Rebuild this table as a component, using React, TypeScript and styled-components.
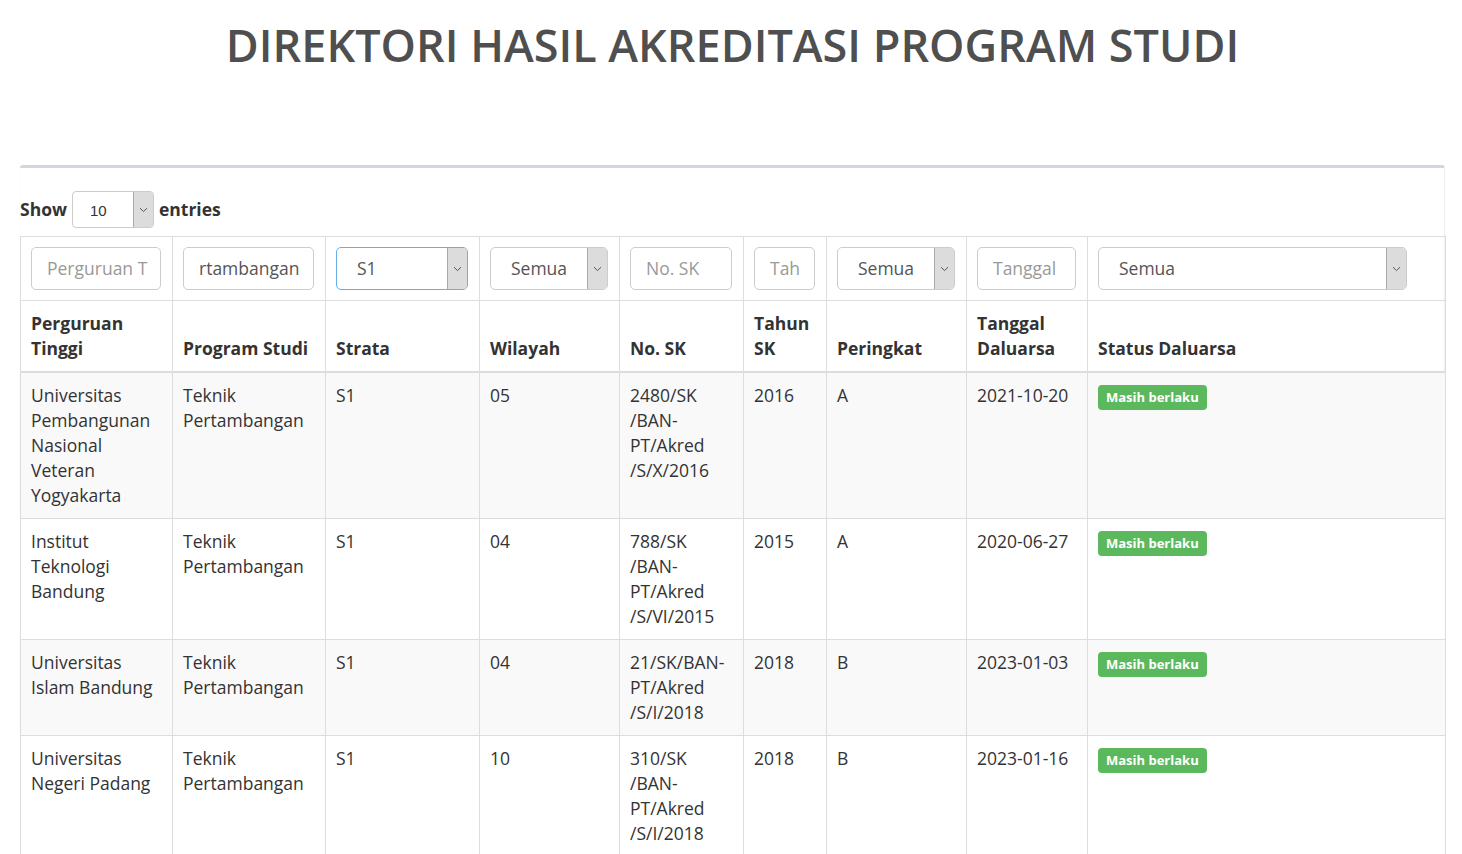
import React from "react";
import styled, { createGlobalStyle } from "styled-components";

const GlobalStyle = createGlobalStyle`
  html, body { margin: 0; padding: 0; background: #fff; }
  body {
    font-family: "Open Sans", "Noto Sans", sans-serif;
    font-size: 17.5px;
    line-height: 25px;
    color: #333;
  }
  * { box-sizing: border-box; }
`;

const Page = styled.div`
  padding: 0 17px 0 20px;
`;

const Title = styled.h1`
  margin: 0;
  padding-top: 19px;
  height: 165px;
  text-align: center;
  font-size: 45px;
  line-height: 52px;
  font-weight: 600;
  color: #4f4f4f;
`;

const Box = styled.div`
  background: #fff;
  border-top: 3px solid #d2d6de;
  border-radius: 3px;
  box-shadow: 0 1px 1px rgba(0, 0, 0, 0.1);
  border-right: 1px solid #f0f0f0;
`;

const LengthRow = styled.div`
  display: flex;
  align-items: center;
  height: 68px;
  padding-top: 15px;
  font-weight: 700;
  color: #333;
`;

const LengthLabel = styled.span`
  font-weight: 700;
`;

const SmallSelect = styled.div`
  display: flex;
  width: 82px;
  height: 37px;
  margin: 0 5px;
  border: 1px solid #ccc;
  border-radius: 4px;
  overflow: hidden;
  background: #fff;
`;

const SmallSelectValue = styled.span`
  flex: 1;
  padding-left: 17px;
  padding-top: 4px;
  font-family: "Liberation Sans", Arial, sans-serif;
  font-size: 15px;
  font-weight: 400;
  line-height: 30px;
  color: #333;
`;

const Arrow = styled.span`
  width: 20px;
  background: #dcdcdc;
  border-left: 1px solid #aaa;
  display: flex;
  align-items: center;
  justify-content: center;
`;

const Table = styled.table`
  width: 1425px;
  border-collapse: collapse;
  table-layout: fixed;
  border: 1px solid #ddd;
`;

const Cell = styled.td`
  border: 1px solid #ddd;
  padding: 10px;
  vertical-align: top;
  word-wrap: break-word;
`;

const FilterCell = styled.td`
  border: 1px solid #ddd;
  padding: 10px;
  vertical-align: middle;
`;

const HeadCell = styled.th`
  border: 1px solid #ddd;
  border-bottom: 2px solid #ddd;
  padding: 10px;
  text-align: left;
  vertical-align: bottom;
  font-weight: 700;
`;

const Row = styled.tr<{ $striped?: boolean }>`
  background: ${(p) => (p.$striped ? "#f9f9f9" : "#fff")};
`;

const Input = styled.div<{ $w: number; $placeholder?: boolean }>`
  width: ${(p) => p.$w}px;
  height: 43px;
  border: 1px solid #ccc;
  border-radius: 5px;
  padding: 0 15px;
  line-height: 41px;
  white-space: nowrap;
  overflow: hidden;
  color: ${(p) => (p.$placeholder ? "#999" : "#555")};
  background: #fff;
`;

const SelectBox = styled.div<{ $w: number; $focus?: boolean }>`
  display: flex;
  width: ${(p) => p.$w}px;
  height: 43px;
  border: 1px solid ${(p) => (p.$focus ? "#66afe9" : "#ccc")};
  border-radius: 5px;
  overflow: hidden;
  background: #fff;
`;

const SelectValue = styled.span`
  flex: 1;
  padding-left: 20px;
  line-height: 41px;
  color: #555;
  white-space: nowrap;
`;

const Badge = styled.span`
  display: inline-block;
  background: #5cb85c;
  color: #fff;
  font-size: 13px;
  font-weight: 700;
  line-height: 15px;
  padding: 5px 8px 5px 8px;
  border-radius: 4px;
  margin-top: 1px;
`;

const Chevron = () => (
  <svg width="9" height="6" viewBox="0 0 9 6" fill="none">
    <path d="M1 1.2 L4.5 4.6 L8 1.2" stroke="#555" strokeWidth="1" />
  </svg>
);

const Select = ({ w, value, focus }: { w: number; value: string; focus?: boolean }) => (
  <SelectBox $w={w} $focus={focus}>
    <SelectValue>{value}</SelectValue>
    <Arrow>
      <Chevron />
    </Arrow>
  </SelectBox>
);

const widths = [152, 153, 154, 140, 124, 83, 140, 121, 358];

const headers = [
  "Perguruan Tinggi",
  "Program Studi",
  "Strata",
  "Wilayah",
  "No. SK",
  "Tahun SK",
  "Peringkat",
  "Tanggal Daluarsa",
  "Status Daluarsa",
];

const rows = [
  ["Universitas Pembangunan Nasional Veteran Yogyakarta", "Teknik Pertambangan", "S1", "05", "2480/SK /BAN-PT/Akred /S/X/2016", "2016", "A", "2021-10-20"],
  ["Institut Teknologi Bandung", "Teknik Pertambangan", "S1", "04", "788/SK /BAN-PT/Akred /S/VI/2015", "2015", "A", "2020-06-27"],
  ["Universitas Islam Bandung", "Teknik Pertambangan", "S1", "04", "21/SK/BAN-PT/Akred /S/I/2018", "2018", "B", "2023-01-03"],
  ["Universitas Negeri Padang", "Teknik Pertambangan", "S1", "10", "310/SK /BAN-PT/Akred /S/I/2018", "2018", "B", "2023-01-16"],
];

export default function App() {
  return (
    <Page>
      <GlobalStyle />
      <Title>DIREKTORI HASIL AKREDITASI PROGRAM STUDI</Title>
      <Box>
        <LengthRow>
          <LengthLabel>Show</LengthLabel>
          <SmallSelect>
            <SmallSelectValue>10</SmallSelectValue>
            <Arrow>
              <Chevron />
            </Arrow>
          </SmallSelect>
          <LengthLabel>entries</LengthLabel>
        </LengthRow>
        <Table>
          <colgroup>
            {widths.map((w, i) => (
              <col key={i} style={{ width: w }} />
            ))}
          </colgroup>
          <thead>
            <tr>
              <FilterCell><Input $w={130} $placeholder>Perguruan T</Input></FilterCell>
              <FilterCell><Input $w={131}>rtambangan</Input></FilterCell>
              <FilterCell><Select w={132} value="S1" focus /></FilterCell>
              <FilterCell><Select w={118} value="Semua" /></FilterCell>
              <FilterCell><Input $w={102} $placeholder>No. SK</Input></FilterCell>
              <FilterCell><Input $w={61} $placeholder>Tah</Input></FilterCell>
              <FilterCell><Select w={118} value="Semua" /></FilterCell>
              <FilterCell><Input $w={99} $placeholder>Tanggal</Input></FilterCell>
              <FilterCell><Select w={309} value="Semua" /></FilterCell>
            </tr>
            <tr>
              {headers.map((h) => (
                <HeadCell key={h}>{h}</HeadCell>
              ))}
            </tr>
          </thead>
          <tbody>
            {rows.map((r, i) => (
              <Row key={i} $striped={i % 2 === 0}>
                {r.map((c, j) => (
                  <Cell key={j}>{c}</Cell>
                ))}
                <Cell>
                  <Badge>Masih berlaku</Badge>
                </Cell>
              </Row>
            ))}
          </tbody>
        </Table>
      </Box>
    </Page>
  );
}
